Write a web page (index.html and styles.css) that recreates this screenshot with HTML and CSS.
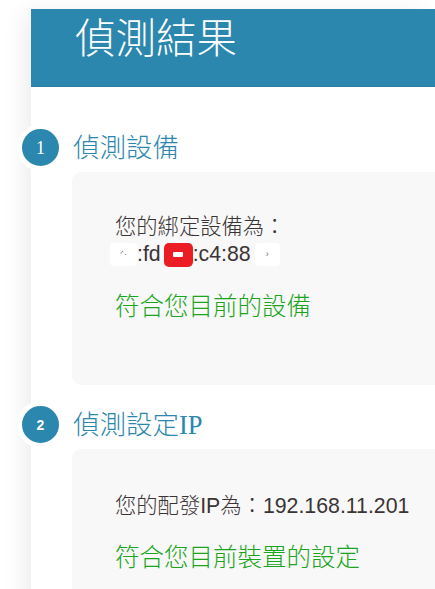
FILE: index.html
```html
<!DOCTYPE html>
<html lang="zh-Hant">
<head>
<meta charset="utf-8">
<title>偵測結果</title>
<link rel="stylesheet" href="styles.css">
</head>
<body>
<div class="panel">
  <header class="header">
    <h1 class="title">偵測結果</h1>
  </header>

  <section class="section first">
    <h2 class="step"><span class="badge">1</span><span class="step-name">偵測設備</span></h2>
    <div class="card card-one">
      <p class="info">您的綁定設備為：</p>
      <p class="info mac">
        <span class="mask mask-a"><span class="mask-mark">ᐟ·</span></span><span>:fd</span><span class="mask-red"><span class="bar"></span></span><span>:c4:88</span><span class="mask mask-b"><span class="mask-mark">›</span></span>
      </p>
      <p class="ok">符合您目前的設備</p>
    </div>
  </section>

  <section class="section second">
    <h2 class="step"><span class="badge sans">2</span><span class="step-name">偵測設定IP</span></h2>
    <div class="card card-two">
      <p class="info">您的配發IP為：192.168.11.201</p>
      <p class="ok">符合您目前裝置的設定</p>
    </div>
  </section>
</div>
</body>
</html>
```

FILE: styles.css
```css
html, body {
  margin: 0;
  padding: 0;
  background: #ffffff;
}

body {
  padding: 9px 0 0 31px;
  font-family: "Liberation Sans", "Noto Sans CJK TC", sans-serif;
  color: #3b3434;
  overflow: hidden;
}

.panel {
  background: #ffffff;
  min-height: 580px;
  box-shadow: -10px 0 22px -4px rgba(0, 0, 0, 0.08);
}

.header {
  box-sizing: border-box;
  height: 78px;
  background: #2b87ad;
  border-bottom: 1px solid #2a7ea2;
  padding-left: 44px;
}

.title {
  margin: 0;
  font-family: "Noto Sans CJK TC", sans-serif;
  font-weight: 300;
  font-size: 40.5px;
  line-height: 54px;
  color: #ffffff;
}

.section {
  padding-left: 41px;
}

.section.first {
  margin-top: 37px;
}

.section.second {
  margin-top: 16px;
}

.step {
  display: flex;
  align-items: center;
  gap: 9px;
  margin: 0 0 1px -55px;
  font-family: "Liberation Serif", "Noto Sans CJK TC", serif;
  font-weight: 300;
  font-size: 26.5px;
  line-height: 36px;
  color: #2b87ad;
}

.badge {
  box-sizing: content-box;
  width: 37px;
  height: 37px;
  border: 5px solid #ffffff;
  border-radius: 50%;
  background: #2b87ad;
  color: #ffffff;
  display: flex;
  align-items: center;
  justify-content: center;
  font-family: "Liberation Serif", serif;
  font-size: 18px;
  font-weight: 400;
  line-height: 1;
  flex: none;
}

.badge.sans {
  font-family: "Liberation Sans", sans-serif;
  font-size: 14px;
  font-weight: 700;
}

.card {
  background: #f8f8f8;
  border-radius: 9px 0 0 9px;
  padding-left: 43px;
}

.card-one {
  padding-top: 42px;
  padding-bottom: 62.5px;
}

.card-two {
  padding-top: 43.5px;
  padding-bottom: 40px;
}

.info {
  margin: 0;
  font-size: 21.3px;
  font-weight: 300;
  line-height: 27px;
  color: #3b3434;
}

.mac {
  display: flex;
  align-items: center;
  height: 27px;
}

.mask {
  display: inline-flex;
  align-items: center;
  justify-content: center;
  height: 23px;
  background: #ffffff;
  border-radius: 4px;
}

.mask-a {
  width: 27px;
  margin-left: -5px;
}

.mask-b {
  width: 25px;
  margin-left: 4px;
}

.mask-mark {
  font-size: 9px;
  color: #6a6a6a;
  line-height: 1;
}

.mask-red {
  display: inline-flex;
  align-items: center;
  justify-content: center;
  width: 29px;
  height: 24px;
  margin-left: 3px;
  background: #ec1c24;
  border-radius: 5px;
}

.bar {
  width: 10px;
  height: 5px;
  background: #ffffff;
  border-radius: 1px;
}

.ok {
  margin: 22.5px 0 0;
  font-size: 24.5px;
  font-weight: 300;
  line-height: 32px;
  color: #1ba51f;
}
```
